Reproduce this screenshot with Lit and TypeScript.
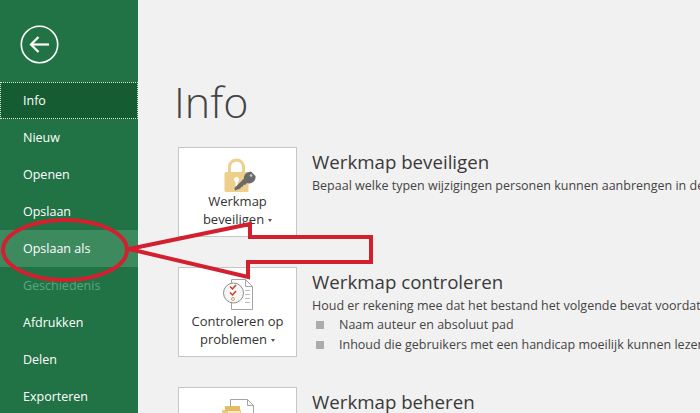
import { LitElement, html, css, svg } from "lit";
import { customElement } from "lit/decorators.js";

const lockIcon = svg`<svg class="icon" width="36" height="37" viewBox="0 0 36 37">
  <path d="M9.500 17v-6a7 7 0 0 1 14 0v6" fill="none" stroke="#ecd08c" stroke-width="3"/>
  <rect x="4.500" y="16" width="24" height="20" rx="1.500" fill="#ebcf8b"/>
  <circle cx="16.500" cy="23.500" r="2.500" fill="#fff"/>
  <rect x="15.500" y="24" width="2" height="6" fill="#fff"/>
  <path d="M15 34.500l-.5-2.500 9.500-9.500c-.5-3 2-6 5-6.500l2-.5 4.500 4.500c.5 3.500-2 7.500-6.500 7.500l-2-.5-2 2-1.500-.5-.5 2-2 .5-.5 1.500-1.500.5z" fill="#6a6a6a"/>
  <circle cx="31" cy="19.500" r="1.300" fill="#ccc"/>
</svg>`;

const checkIcon = svg`<svg class="icon" width="32" height="37" viewBox="0 0 32 37" fill="none">
  <path d="M9.500 3.500h14l7 7v23h-21z" fill="#fff" stroke="#a4a4a4"/>
  <path d="M23.500 3.500v7h7" stroke="#a4a4a4"/>
  <path d="M23 14.500h5M23 18.500h5M23 22.500h5M23 26.500h5" stroke="#bcbcbc"/>
  <circle cx="11.500" cy="17" r="10" fill="#f6f6f6" stroke="#8e8e8e"/>
  <path d="M8 10.500l2.500 2.500 3.500-4M8 16.500l2.500 2.500 3.500-4" stroke="#c8402f" stroke-width="1.500"/>
  <circle cx="11" cy="23" r="1.500" stroke="#d0a860"/>
</svg>`;

const manageIcon = svg`<svg class="icon" width="36" height="37" viewBox="0 0 36 37" fill="none">
  <path d="M10.500 3.500h17l6 6v30h-23z" fill="#fff" stroke="#a4a4a4"/>
  <path d="M27.500 3.500v6h6" stroke="#a4a4a4"/>
  <rect x="2" y="14" width="19" height="24" fill="#eccd7c"/>
  <rect x="5" y="10" width="15" height="5" fill="#e3bd66"/>
  <rect x="8" y="15" width="12" height="2" fill="#f6e6b8"/>
</svg>`;

const caret = html`<span class="caret"></span>`;

@customElement("app-root")
export class AppRoot extends LitElement {
  static styles = css`
    :host {
      display: block;
      position: relative;
      width: 700px;
      height: 413px;
      overflow: hidden;
      font-family: "Open Sans", "Noto Sans", sans-serif;
      background: #f1f1f1;
    }
    .page { display: flex; height: 413px; }
    .side {
      flex: 0 0 138px;
      width: 138px;
      background: #217346;
      display: flex;
      flex-direction: column;
    }
    .backrow { height: 82px; padding: 25px 0 0 20px; box-sizing: border-box; flex: none; }
    .back { display: block; }
    .item {
      flex: none;
      height: 37px;
      display: flex;
      align-items: center;
      padding: 0 0 0 23px;
      box-sizing: border-box;
      color: #fff;
      font-size: 12.500px;
    }
    .item.active {
      background: #165c33;
      outline: 1px dotted #d8e8dc;
      outline-offset: -1px;
    }
    .item.hover { background: #3d8a5f; }
    .item.off { color: #5ea680; }
    .main { flex: 1; padding: 0 0 0 40px; min-width: 0; }
    h1 {
      margin: 0 0 0 -4px;
      height: 147px;
      padding-top: 73px;
      box-sizing: border-box;
      font-size: 43px;
      line-height: 58px;
      font-weight: 300;
      color: #444;
    }
    .section { display: flex; height: 90px; margin-bottom: 30px; white-space: nowrap; }
    .tile {
      flex: none;
      width: 119px;
      height: 90px;
      box-sizing: border-box;
      background: #fff;
      border: 1px solid #c6c6c6;
      display: flex;
      flex-direction: column;
      align-items: center;
      color: #333;
      font-size: 13px;
      line-height: 18px;
      text-align: center;
    }
    .tile .ic { height: 37px; margin-top: 8px; flex: none; display: flex; justify-content: center; }
    .tile .lbl { width: 117px; margin-top: -1px; }
    .caret {
      display: inline-block;
      width: 0;
      height: 0;
      border: 2.500px solid transparent;
      border-top: 3px solid #555;
      border-bottom: 0;
      margin-left: 4px;
      vertical-align: 2px;
    }
    .body { margin-left: 15px; }
    h2 {
      margin: 0;
      font-size: 18.700px;
      line-height: 26px;
      font-weight: 400;
      color: #3a3a3a;
      padding-top: 2px;
    }
    .body p { margin: 0; font-size: 12.500px; line-height: 19px; color: #444; padding-top: 1px; }
    ul { margin: 0; padding: 0; list-style: none; }
    li {
      display: flex;
      align-items: center;
      font-size: 12.500px;
      line-height: 20px;
      color: #444;
    }
    li::before {
      content: "";
      width: 8px;
      height: 8px;
      background: #ababab;
      margin: 0 15px 0 4px;
      flex: none;
    }
    .mark { position: absolute; left: 0; top: 0; pointer-events: none; }
  `;

  render() {
    return html`
      <div class="page">
        <nav class="side">
          <div class="backrow">
            <svg class="back" width="39" height="39" viewBox="0 0 39 39" fill="none" stroke="#fff">
              <circle cx="19.500" cy="19.500" r="18.200" stroke-width="1.600"/>
              <path d="M11 19.500h18" stroke-width="2.200"/>
              <path d="M18.500 12l-7.500 7.500 7.500 7.500" stroke-width="2.200"/>
            </svg>
          </div>
          <div class="item active">Info</div>
          <div class="item">Nieuw</div>
          <div class="item">Openen</div>
          <div class="item">Opslaan</div>
          <div class="item hover">Opslaan als</div>
          <div class="item off">Geschiedenis</div>
          <div class="item">Afdrukken</div>
          <div class="item">Delen</div>
          <div class="item">Exporteren</div>
        </nav>
        <main class="main">
          <h1>Info</h1>
          <section class="section">
            <div class="tile">
              <div class="ic">${lockIcon}</div>
              <div class="lbl">Werkmap<br />beveiligen${caret}</div>
            </div>
            <div class="body">
              <h2>Werkmap beveiligen</h2>
              <p>Bepaal welke typen wijzigingen personen kunnen aanbrengen in deze werkmap.</p>
            </div>
          </section>
          <section class="section">
            <div class="tile">
              <div class="ic">${checkIcon}</div>
              <div class="lbl">Controleren op<br />problemen${caret}</div>
            </div>
            <div class="body">
              <h2>Werkmap controleren</h2>
              <p>Houd er rekening mee dat het bestand het volgende bevat voordat u het publiceert:</p>
              <ul>
                <li>Naam auteur en absoluut pad</li>
                <li>Inhoud die gebruikers met een handicap moeilijk kunnen lezen</li>
              </ul>
            </div>
          </section>
          <section class="section">
            <div class="tile">
              <div class="ic">${manageIcon}</div>
            </div>
            <div class="body">
              <h2>Werkmap beheren</h2>
            </div>
          </section>
        </main>
      </div>
      <svg class="mark" width="700" height="413" viewBox="0 0 700 413" fill="none" stroke="#d2202f">
        <ellipse cx="65" cy="250" rx="62" ry="30" stroke-width="4"/>
        <path d="M129 249L250 224V237H371V262H248V277Z" stroke-width="4" stroke-linejoin="miter"/>
      </svg>
    `;
  }
}
